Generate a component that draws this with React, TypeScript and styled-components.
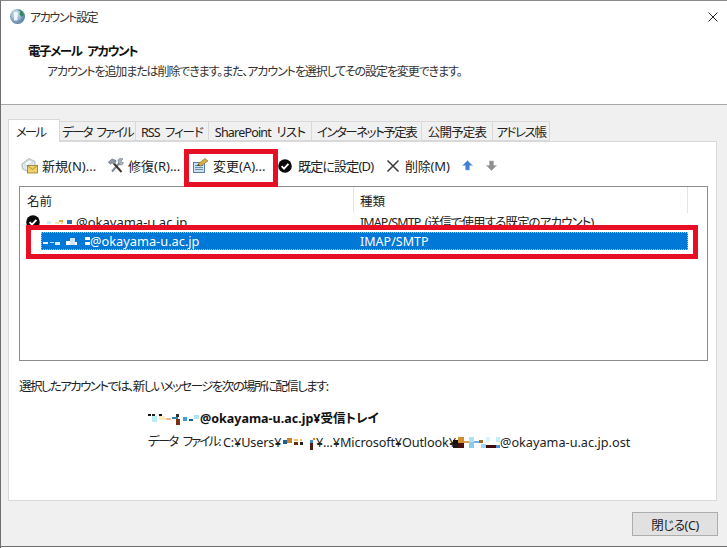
import React from "react";
import styled, { createGlobalStyle } from "styled-components";

const Global = createGlobalStyle`
  html, body { margin: 0; padding: 0; background: #fff; }
  body {
    font-family: "Noto Sans", "Noto Sans CJK JP", sans-serif;
    font-size: 12px;
    color: #1a1a1a;
    font-feature-settings: "palt";
  }
`;

const Dialog = styled.div`
  position: relative; width: 727px; height: 548px; box-sizing: border-box;
  display: flex; flex-direction: column; overflow: hidden;
  border-top: 1px solid #8a8a8a; border-left: 1px solid #707070;
  background: #fff;
`;
const TitleBar = styled.div`
  height: 31px; display: flex; align-items: center; padding: 0 9px 0 8px; gap: 4px; flex: none; font-size: 12px;
`;
const TitleText = styled.span`flex: 1; color: #333; letter-spacing: -1.4px;`;
const Header = styled.div`
  height: 73px; box-sizing: border-box; padding-top: 11px; flex: none;
  border-bottom: 1px solid #a8a8a8;
`;
const HeaderTitle = styled.div`margin-left: 27px; font-weight: 700; font-size: 12.5px; line-height: 18px; color: #111; letter-spacing: -1.4px; word-spacing: 4px;`;
const HeaderSub = styled.div`margin: 2px 0 0 46px; font-size: 12px; line-height: 18px; color: #333; letter-spacing: -1.1px;`;
const Body = styled.div`
  flex: 1; background: #f0f0f0; padding: 14px 10px 0 7px; display: flex; flex-direction: column;
  border-bottom: 1px solid #707070; margin-bottom: 1px;
`;
const Tabs = styled.div`display: flex; align-items: flex-end; height: 22px; flex: none;`;
const Tab = styled.div<{ $w: number; $ls: number; $active?: boolean }>`
  width: ${(p) => p.$w}px; box-sizing: border-box;
  height: ${(p) => (p.$active ? 23 : 20)}px;
  display: flex; align-items: center; justify-content: center; white-space: nowrap;
  font-size: 12.5px; color: #222; letter-spacing: ${(p) => p.$ls}px; word-spacing: 3px;
  padding-right: ${(p) => (p.$active ? 7 : 0)}px;
  background: ${(p) => (p.$active ? "#fff" : "#f0f0f0")};
  border: 1px solid #d9d9d9; border-left-width: ${(p) => (p.$active ? 1 : 0)}px;
  border-bottom: ${(p) => (p.$active ? "none" : "1px solid #d9d9d9")};
  margin-bottom: ${(p) => (p.$active ? -1 : 0)}px;
  position: relative; z-index: ${(p) => (p.$active ? 1 : 0)};
`;
const Panel = styled.div`
  height: 360px; box-sizing: border-box; background: #fff; border: 1px solid #d9d9d9; flex: none;
  padding: 0 8px 0 10px; display: flex; flex-direction: column;
`;
const Toolbar = styled.div`height: 44px; display: flex; align-items: center; flex: none; padding: 3px 0 0 2px; box-sizing: border-box;`;
const ToolButton = styled.div<{ $w: number; $gap?: number; $ls?: number }>`
  width: ${(p) => p.$w}px; flex: none; display: flex; align-items: center; gap: ${(p) => p.$gap ?? 4}px;
  white-space: nowrap; font-size: 13px; color: #222; letter-spacing: ${(p) => p.$ls ?? 0}px;
  svg { flex: none; }
`;
const List = styled.div`
  height: 175px; box-sizing: border-box; border: 1px solid #8c8c8c; flex: none; overflow: hidden;
`;
const ListHead = styled.div`height: 26px; display: flex; flex: none;`;
const HeadCell = styled.div<{ $w: number; $pad: number }>`
  width: ${(p) => p.$w}px; box-sizing: border-box; padding-left: ${(p) => p.$pad}px; display: flex; align-items: center;
  border-right: 1px solid #e5e5e5; font-size: 12.5px; color: #222;
`;
const Row = styled.div`
  height: 17px; display: flex; align-items: center; font-size: 12.5px; color: #222; margin-bottom: 2px;
`;
const NameCell = styled.div`width: 340px; box-sizing: border-box; flex: none; display: flex; align-items: center; padding-left: 6px; gap: 7px; font-size: 13px;`;
const TypeText = styled.span`letter-spacing: -0.9px; word-spacing: 2px;`;
const MailAddress = styled.span`margin-left: -3px;`;
const SelectedRow = styled.div`
  margin-left: 21px; width: 647px; height: 18px; box-sizing: border-box; display: flex; align-items: center;
  background: #0078d7; color: #fff; font-size: 12.5px; outline: 1px dotted #9fc9ec; outline-offset: -1px;
`;
const SelectedName = styled.div`width: 318px; flex: none; display: flex; align-items: center; padding-left: 1px; font-size: 12.8px;`;
const Delivery = styled.div`margin-top: 17px; font-size: 12.5px; line-height: 18px; color: #222; letter-spacing: -1.6px;`;
const Folder = styled.div`
  margin: 14px 0 0 129px; display: flex; align-items: center; font-weight: 700; font-size: 12.5px; line-height: 18px; color: #111;
`;
const DataFile = styled.div`
  margin: 5px 0 0 129px; display: flex; align-items: center; font-size: 12.7px; line-height: 18px; color: #222; white-space: nowrap;
`;
const DataLabel = styled.span`letter-spacing: -1.9px; word-spacing: 4px; font-size: 12.5px; width: 75px; flex: none;`;
const PathPart = styled.span<{ $w: number }>`width: ${(p) => p.$w}px; flex: none; letter-spacing: -0.15px;`;
const Footer = styled.div`flex: 1; display: flex; justify-content: flex-end; align-items: flex-start; padding-top: 11px; margin-right: -1px;`;
const CloseButton = styled.div`
  width: 86px; height: 24px; box-sizing: border-box; border: 1px solid #adadad; background: #e1e1e1;
  display: flex; align-items: center; justify-content: center; font-size: 12.5px; color: #222; letter-spacing: -0.4px;
`;
const Highlight = styled.div<{ $x: number; $y: number; $w: number; $h: number }>`
  position: absolute; left: ${(p) => p.$x}px; top: ${(p) => p.$y}px; width: ${(p) => p.$w}px; height: ${(p) => p.$h}px;
  box-sizing: border-box; border: 5px solid #e60f23; pointer-events: none; z-index: 5;
`;
/* the white inside of the row highlight hides the lower part of the row above it */
const HighlightFill = styled.div`
  position: absolute; left: 30px; top: 228px; width: 10px; height: 26px; background: #fff; z-index: 4;
`;

type Cell = [number, number, number, number, string];
const Mosaic = ({ w, h, cells }: { w: number; h: number; cells: Cell[] }) => (
  <svg width={w} height={h} viewBox={`0 0 ${w} ${h}`} shapeRendering="crispEdges" style={{ flex: "none" }}>
    {cells.map(([x, y, cw, ch, c], i) => (
      <rect key={i} x={x} y={y} width={cw} height={ch} fill={c} />
    ))}
  </svg>
);

const GlobeIcon = () => (
  <svg width="17" height="17" viewBox="0 0 17 17">
    <defs>
      <radialGradient id="g" cx="0.4" cy="0.35" r="0.75">
        <stop offset="0" stopColor="#e8f0f6" />
        <stop offset="0.5" stopColor="#8fb0cf" />
        <stop offset="1" stopColor="#2f5f8f" />
      </radialGradient>
    </defs>
    <circle cx="8.5" cy="8.5" r="7.5" fill="url(#g)" />
    <path d="M9 1.3c3.2.5 5.6 2.6 6 6l-2.6 1.5-2-2.6 1-2.4z" fill="#2f8a5a" />
    <path d="M5 4h3.4v8.5H5z" fill="#f4f7fa" opacity=".95" />
    <path d="M3 12c3 3 8 3 11 .5-3 3.8-8 4-11-.5z" fill="#8a9cb0" />
  </svg>
);
const MailIcon = () => (
  <svg width="17" height="17" viewBox="0 0 17 17">
    <path d="M.8 7L8 1.5l6 3v5l-6 5.5L1.5 12z" fill="#dfe8ea" stroke="#9aacb2" strokeWidth=".8" />
    <path d="M3 6.5l5.5-3.5 3.5 1.8-6 4z" fill="#f8fafa" stroke="#b8c6ca" strokeWidth=".6" />
    <rect x="6.5" y="8.5" width="10" height="7.5" fill="#f2d266" stroke="#8f7a36" strokeWidth=".8" />
    <path d="M6.5 8.5l5 4 5-4" fill="none" stroke="#8f7a36" strokeWidth=".8" />
  </svg>
);
const ToolsIcon = () => (
  <svg width="17" height="17" viewBox="0 0 17 17" fill="none">
    <path d="M5 14.5L12.5 6" stroke="#7d8a96" strokeWidth="2" />
    <path d="M11 3c1-1.8 3.4-2 5-1l-2 1.8.6 1.6 1.8.2c-.2 2-2.4 3-4.2 2z" fill="#a8b4bf" stroke="#66727e" strokeWidth=".6" />
    <path d="M14.5 15L6.5 6" stroke="#3c3428" strokeWidth="2" />
    <path d="M1.5 5l3.5-3 4 1.5-.5 2-1.5 1.8-2-1.5-1.8 1.5z" fill="#8f9aa6" stroke="#55606c" strokeWidth=".6" />
  </svg>
);
const ChangeIcon = () => (
  <svg width="17" height="17" viewBox="0 0 17 17">
    <rect x="1.5" y="5.5" width="11" height="10" fill="#cfe0ef" stroke="#5b7f9f" />
    <path d="M3 8.5h8M3 10.5h8M3 12.5h8" stroke="#6a90b0" />
    <path d="M6 7l7-5.5 3 2.5-7.5 5z" fill="#d8b04a" stroke="#8f7428" strokeWidth=".7" />
    <path d="M5 9l1-2 2.5 2z" fill="#444" />
  </svg>
);
const CheckIcon = () => (
  <svg width="14" height="14" viewBox="0 0 14 14">
    <circle cx="7" cy="7" r="6.8" fill="#0a0a0a" />
    <path d="M3.6 7.2l2.4 2.4 4.4-4.8" fill="none" stroke="#fff" strokeWidth="1.9" />
  </svg>
);
const CrossIcon = () => (
  <svg width="14" height="14" viewBox="0 0 14 14">
    <path d="M1.5 1.5l11 11M12.5 1.5l-11 11" stroke="#3a3a3a" strokeWidth="1.5" />
  </svg>
);
const CloseGlyph = () => (
  <svg width="10" height="10" viewBox="0 0 10 10">
    <path d="M.5.5l9 9M9.5.5l-9 9" stroke="#222" strokeWidth="1" />
  </svg>
);
const ArrowIcon = ({ down }: { down?: boolean }) => (
  <svg width="11" height="11" viewBox="0 0 11 11">
    <path
      d={down ? "M3.5 1h4v4.5h3L5.5 10.5.5 5.5h3z" : "M5.5.5l5 5h-3V10h-4V5.5h-3z"}
      fill={down ? "#8f8f8f" : "#3f7fd8"}
      stroke={down ? "#a8a8a8" : "#8fb4ec"}
      strokeWidth=".6"
    />
  </svg>
);

const topRowMosaic: Cell[] = [
  [0, 4, 4, 3, "#cdeffa"], [8, 5, 4, 2, "#fbe3a8"], [12, 3, 4, 2, "#e8a840"], [14, 5, 2, 2, "#f8d8a0"], [20, 3, 5, 4, "#2b6fa8"],
];
const selMosaic: Cell[] = [
  [1, 7, 5, 2, "#e8f4fc"], [8, 7, 4, 1, "#bfe0f5"], [13, 7, 5, 3, "#d9eefb"], [24, 6, 4, 4, "#ffffff"], [28, 3, 5, 7, "#cfe4f8"], [33, 7, 2, 3, "#ffffff"], [43, 2, 5, 3, "#ffffff"], [43, 7, 5, 3, "#ffffff"],
];
const folderMosaic: Cell[] = [
  [0, 2, 3, 2, "#111"], [4, 2, 3, 2, "#222"], [4, 4, 5, 6, "#b5ecf5"], [11, 2, 3, 2, "#111"], [11, 4, 6, 4, "#fcecc0"], [18, 6, 5, 2, "#f0b890"], [24, 5, 6, 2, "#2f7fb0"], [28, 2, 3, 3, "#333"], [28, 7, 4, 6, "#7a3010"], [35, 5, 4, 4, "#3d9fd8"], [41, 7, 4, 2, "#1a5f90"], [46, 3, 5, 4, "#aee4f4"],
];
const userMosaic: Cell[] = [
  [0, 7, 4, 4, "#1f5f90"], [4, 5, 5, 5, "#c8842a"], [11, 6, 4, 2, "#f4c060"], [11, 9, 4, 3, "#6a3010"], [17, 6, 2, 2, "#f4c060"], [17, 9, 3, 3, "#222"], [27, 7, 3, 3, "#3f8fd0"], [27, 10, 3, 7, "#4a2010"], [30, 5, 2, 2, "#c88a30"],
];
const ostMosaic: Cell[] = [
  [0, 6, 5, 4, "#111"], [0, 10, 5, 4, "#1a1a1a"], [5, 3, 6, 6, "#d0902f"], [5, 9, 6, 5, "#4a0f0f"], [11, 7, 5, 2, "#d8a050"], [16, 3, 5, 5, "#aee0f5"], [16, 8, 5, 6, "#88ccee"], [21, 7, 5, 2, "#6fb0e8"], [26, 6, 4, 3, "#a06a20"], [28, 10, 5, 4, "#9ad8f0"], [33, 3, 4, 5, "#d8f4fb"], [33, 11, 10, 3, "#3f0a0a"], [43, 3, 5, 5, "#bfeefc"], [43, 11, 5, 3, "#4f8fd8"],
];

export default function App() {
  return (
    <>
      <Global />
      <Dialog>
        <TitleBar>
          <GlobeIcon />
          <TitleText>アカウント設定</TitleText>
          <CloseGlyph />
        </TitleBar>
        <Header>
          <HeaderTitle>電子メール アカウント</HeaderTitle>
          <HeaderSub>アカウントを追加または削除できます。また、アカウントを選択してその設定を変更できます。</HeaderSub>
        </Header>
        <Body>
          <Tabs>
            <Tab $w={52} $ls={-2} $active>メール</Tab>
            <Tab $w={76} $ls={-1.7}>データ ファイル</Tab>
            <Tab $w={73} $ls={-1}>RSS フィード</Tab>
            <Tab $w={103} $ls={-0.8}>SharePoint リスト</Tab>
            <Tab $w={110} $ls={-1.5}>インターネット予定表</Tab>
            <Tab $w={71} $ls={-0.8}>公開予定表</Tab>
            <Tab $w={57} $ls={-1.4}>アドレス帳</Tab>
          </Tabs>
          <Panel>
            <Toolbar>
              <ToolButton $w={86}><MailIcon />新規(N)...</ToolButton>
              <ToolButton $w={85}><ToolsIcon />修復(R)...</ToolButton>
              <ToolButton $w={86}><ChangeIcon />変更(A)...</ToolButton>
              <ToolButton $w={108} $gap={6} $ls={-0.8}><CheckIcon />既定に設定(D)</ToolButton>
              <ToolButton $w={76} $gap={5} $ls={-0.2}><CrossIcon />削除(M)</ToolButton>
              <ToolButton $w={24}><ArrowIcon /></ToolButton>
              <ToolButton $w={20}><ArrowIcon down /></ToolButton>
            </Toolbar>
            <List>
              <ListHead>
                <HeadCell $w={334} $pad={7}>名前</HeadCell>
                <HeadCell $w={334} $pad={6}>種類</HeadCell>
              </ListHead>
              <Row>
                <NameCell>
                  <CheckIcon />
                  <Mosaic w={25} h={10} cells={topRowMosaic} />
                  <MailAddress>@okayama-u.ac.jp</MailAddress>
                </NameCell>
                <TypeText>IMAP/SMTP (送信で使用する既定のアカウント)</TypeText>
              </Row>
              <SelectedRow>
                <SelectedName>
                  <Mosaic w={48} h={12} cells={selMosaic} />
                  @okayama-u.ac.jp
                </SelectedName>
                IMAP/SMTP
              </SelectedRow>
            </List>
            <Delivery>選択したアカウントでは、新しいメッセージを次の場所に配信します:</Delivery>
            <Folder>
              <Mosaic w={52} h={14} cells={folderMosaic} />
              @okayama-u.ac.jp¥受信トレイ
            </Folder>
            <DataFile>
              <DataLabel>データ ファイル:</DataLabel>
              <PathPart $w={60}>C:¥Users¥</PathPart>
              <Mosaic w={33} h={18} cells={userMosaic} />
              <PathPart $w={137}>¥...¥Microsoft¥Outlook¥</PathPart>
              <Mosaic w={47} h={16} cells={ostMosaic} />
              @okayama-u.ac.jp.ost
            </DataFile>
          </Panel>
          <Footer>
            <CloseButton>閉じる(C)</CloseButton>
          </Footer>
        </Body>
        <Highlight $x={183} $y={148} $w={94} $h={38} />
        <Highlight $x={25} $y={224} $w={672} $h={34} />
        <HighlightFill />
      </Dialog>
    </>
  );
}
